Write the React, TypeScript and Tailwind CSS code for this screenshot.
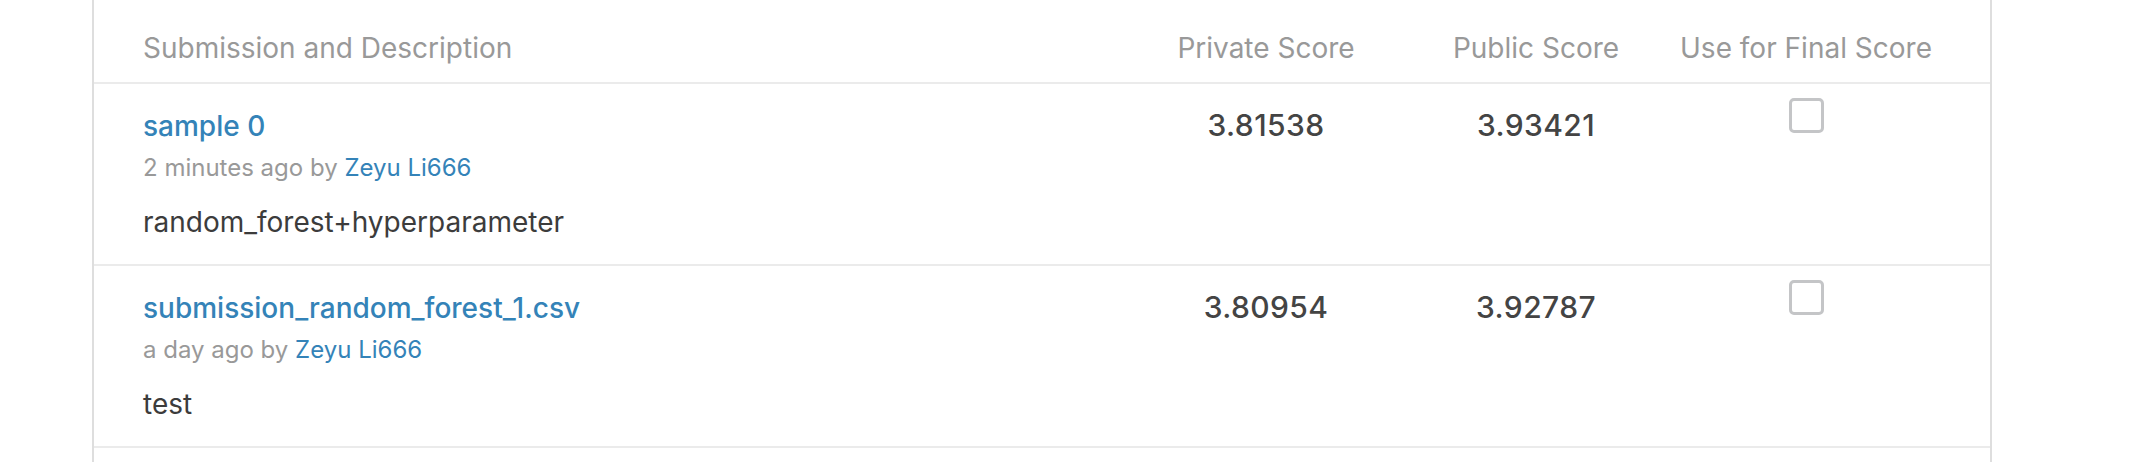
import React from "react";

type Row = {
  title: string;
  when: string;
  user: string;
  desc: string;
  priv: string;
  pub: string;
};

const rows: Row[] = [
  {
    title: "sample 0",
    when: "2 minutes ago by",
    user: "Zeyu Li666",
    desc: "random_forest+hyperparameter",
    priv: "3.81538",
    pub: "3.93421",
  },
  {
    title: "submission_random_forest_1.csv",
    when: "a day ago by",
    user: "Zeyu Li666",
    desc: "test",
    priv: "3.80954",
    pub: "3.92787",
  },
];

export default function App() {
  return (
    <div className="min-h-[462px] bg-white font-['Inter','Noto_Sans',sans-serif]">
      <div className="ml-[92px] w-[1900px] min-h-[462px] border-x-2 border-[#dedede]">
        <div className="grid h-[84px] grid-cols-[1fr_270px_270px_270px] border-b-2 border-[#ebebeb] px-[49px] pt-[28px] text-[28px] leading-[40px] text-[#999999]">
          <div>Submission and Description</div>
          <div className="text-center">Private Score</div>
          <div className="text-center">Public Score</div>
          <div className="text-center">Use for Final Score</div>
        </div>
        {rows.map((r) => (
          <div
            key={r.title}
            className="grid grid-cols-[1fr_270px_270px_270px] items-start border-b-2 border-[#ebebeb] px-[49px]"
          >
            <div className="pt-[22px] pb-[22px]">
              <div className="text-[28px] font-medium leading-[40px] text-[#3483b8]">
                {r.title}
              </div>
              <div className="mt-[4px] text-[24px] leading-[36px] text-[#999999]">
                {r.when} <span className="text-[#3483b8]">{r.user}</span>
              </div>
              <div className="mt-[16px] text-[28px] leading-[40px] text-[#3c3c3c]">
                {r.desc}
              </div>
            </div>
            <div className="pt-[21px] text-center text-[30px] font-medium leading-[40px] tracking-[0.4px] text-[#444444]">
              {r.priv}
            </div>
            <div className="pt-[21px] text-center text-[30px] font-medium leading-[40px] tracking-[0.4px] text-[#444444]">
              {r.pub}
            </div>
            <div className="flex justify-center pt-[14px]">
              <div className="h-[35px] w-[35px] rounded-[5px] border-[3px] border-[#c4c5c7] bg-white" />
            </div>
          </div>
        ))}
      </div>
    </div>
  );
}
